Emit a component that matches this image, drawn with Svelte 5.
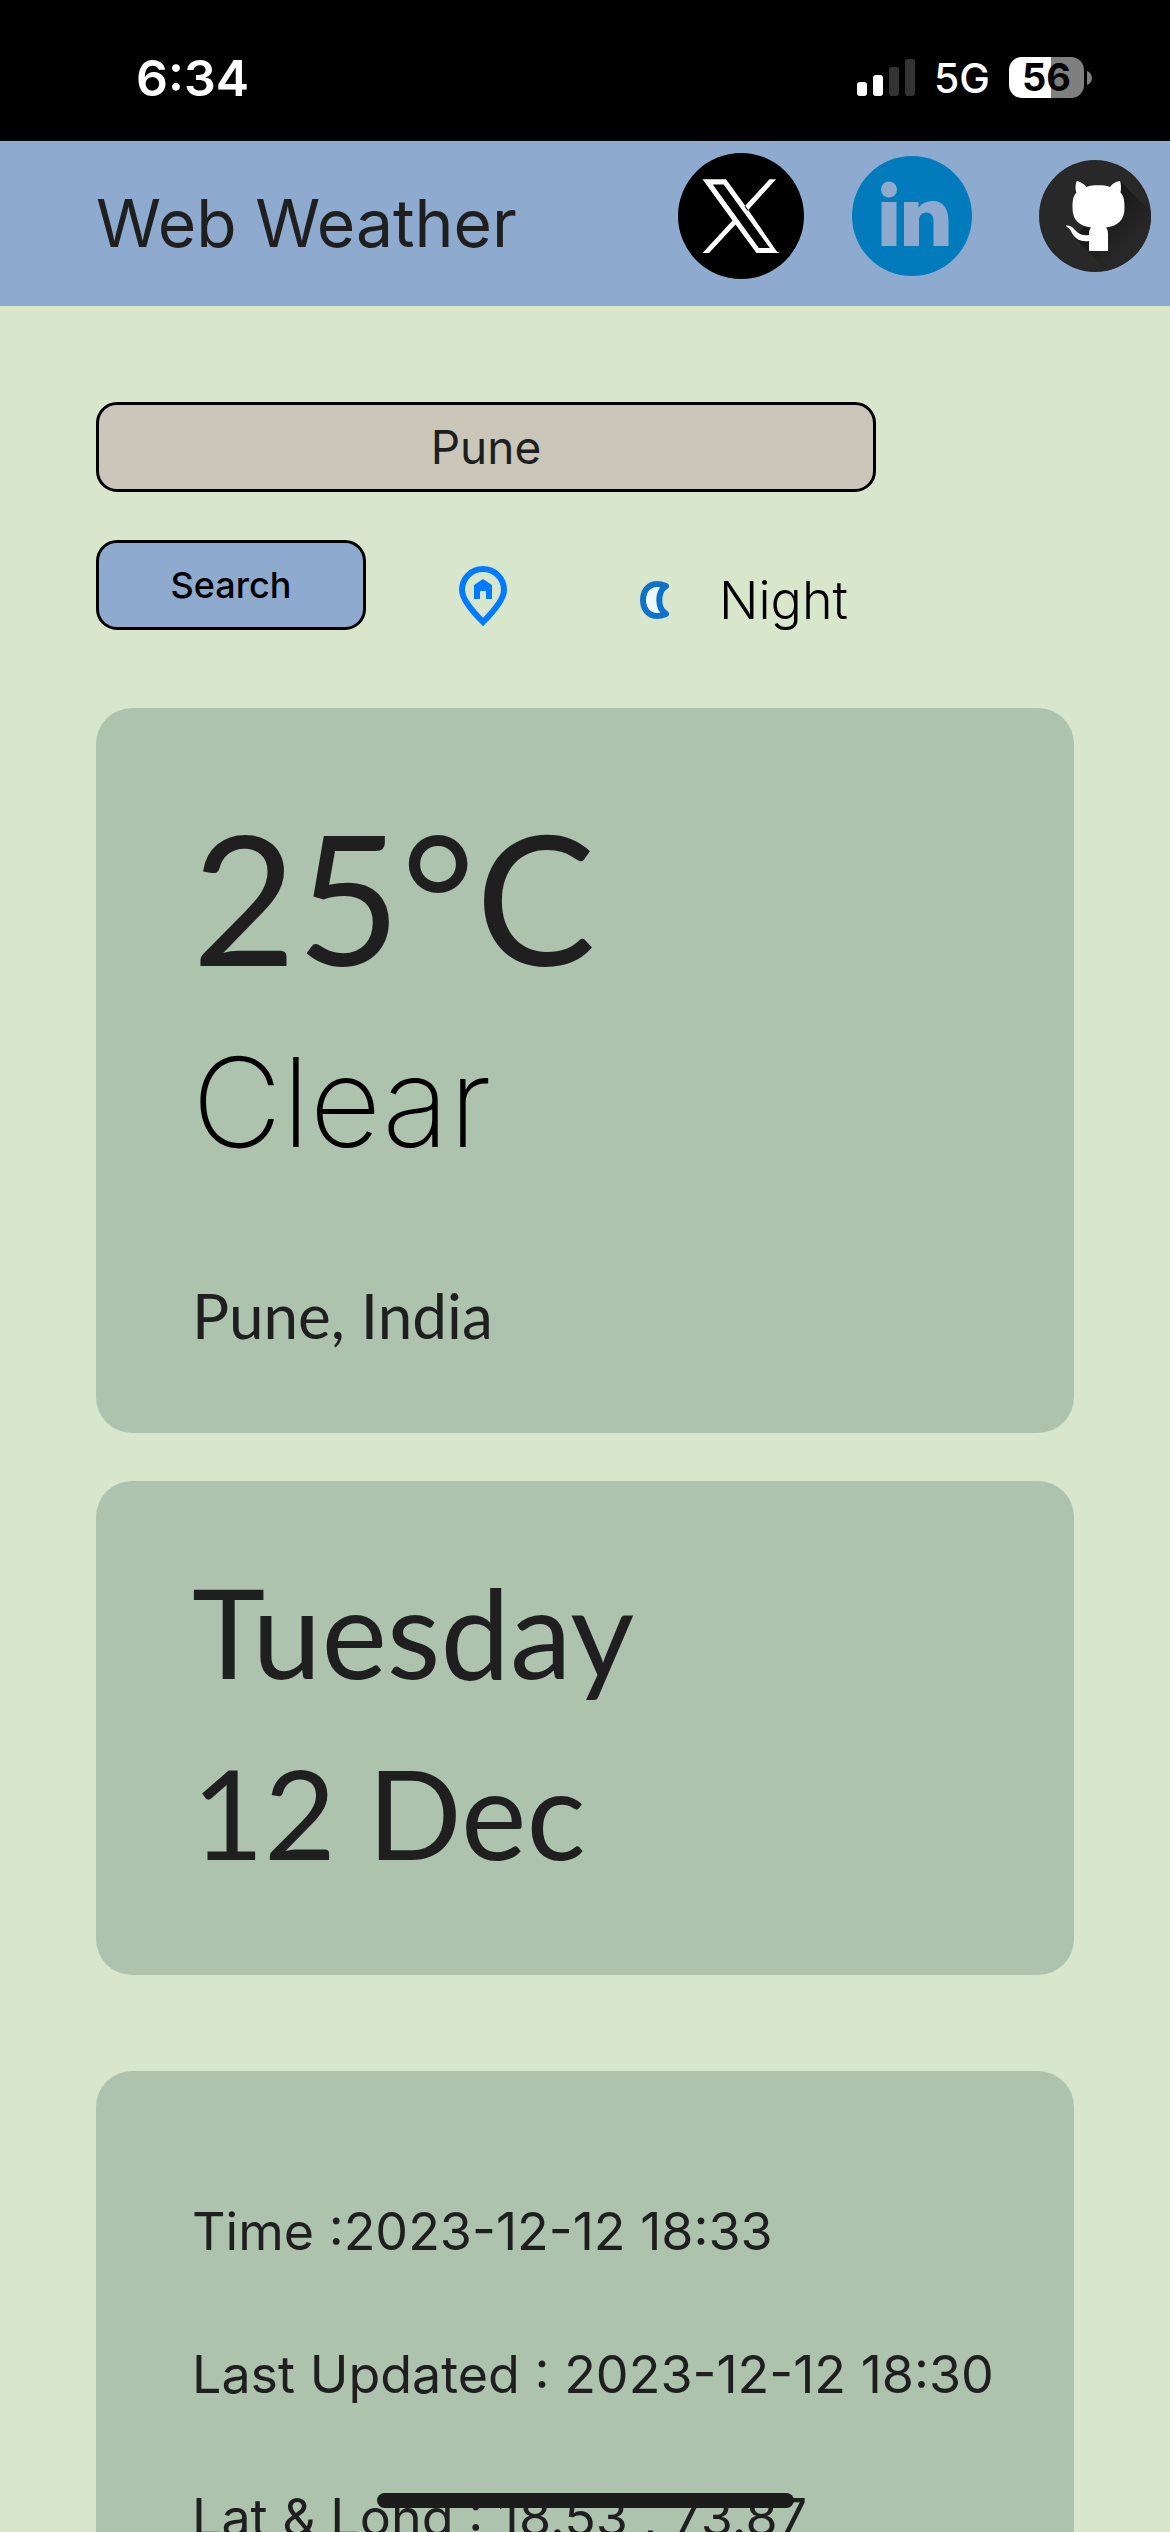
<script>
  let city = $state('Pune');

  const signal = [
    { height: 14, on: true },
    { height: 21, on: true },
    { height: 29, on: false },
    { height: 37, on: false }
  ];

  const details = [
    'Time :2023-12-12 18:33',
    'Last Updated : 2023-12-12 18:30',
    'Lat & Long : 18.53 , 73.87'
  ];
</script>

<div class="screen">
  <div class="status">
    <time class="clock">6:34</time>
    <div class="indicators">
      <div class="signal">
        {#each signal as bar}
          <span class="bar" class:on={bar.on} style="height: {bar.height}px"></span>
        {/each}
      </div>
      <span class="network">5G</span>
      <div class="battery">
        <span class="level">56</span>
        <svg class="cap" width="5" height="14" viewBox="0 0 5 14" aria-hidden="true">
          <path d="M0 0C3 1 5 4 5 7S3 13 0 14Z" fill="#7f7f7f" />
        </svg>
      </div>
    </div>
  </div>

  <header>
    <h1>Web Weather</h1>
    <nav>
      <a class="x" href="#x" aria-label="X">
        <svg viewBox="0 0 126 126">
          <circle cx="63" cy="63" r="63" fill="#000" />
          <path fill="#fff" fill-rule="evenodd" d="M24.5 26.3H48L71 58 99 98.800 102 100H78.500L57.500 71.500 31 100H24.500L54.500 67.500ZM34.800 31.500 80.800 95H91.800L45.600 31.500ZM66.500 53.500 91.500 26.300H98L69.500 57.800Z" />
        </svg>
      </a>
      <a class="linkedin" href="#linkedin" aria-label="LinkedIn">
        <svg viewBox="0 0 120 120">
          <circle cx="60" cy="60" r="60" fill="#027bbc" />
          <g fill="#8eabcf">
            <circle cx="37" cy="33.500" r="8" />
            <path d="M29.500 46H44.500V90H29.500ZM52 46H66.500V52C69 48 74 45 80.500 45 92 45 96.500 53 96.500 66V90H81.500V65C81.500 60 79 56.500 74 56.500 69.500 56.500 67 60 67 65V90H52Z" />
          </g>
        </svg>
      </a>
      <a class="github" href="#github" aria-label="GitHub">
        <svg viewBox="0 0 112 112">
          <defs>
            <linearGradient id="shade" x1="55" y1="50" x2="90" y2="85" gradientUnits="userSpaceOnUse">
              <stop offset="0" stop-color="#151515" />
              <stop offset="1" stop-color="#282828" />
            </linearGradient>
            <clipPath id="disc"><circle cx="56" cy="56" r="56" /></clipPath>
          </defs>
          <circle cx="56" cy="56" r="56" fill="#282828" />
          <path clip-path="url(#disc)" fill="url(#shade)" d="M81 21 116 56V112H68L36 78 50 60Z" />
          <path fill="#fff" d="M38 21C37 21 35.500 29 37.500 32.500 34 36 33.500 41 33.500 48 33.500 61 41 66 52 67.500 50 70 50 72 50 75 42 76 39 73 35.500 69.500 33 66 30 65 27 65.500 27 67 30 67.500 32 71 35 78 41 82.500 50 81V91H69V75C69 71 68.500 69 67 67.500 78 66 85.500 61 85.500 48 85.500 41 85 36 81.500 32.500 82.500 29 82 21 80.500 21 77 21.500 73 24 71 27 67 25.300 64 25.300 59.500 25.300 55 25.300 51 25.300 47.500 27 45 24 41 21.500 38 21Z" />
        </svg>
      </a>
    </nav>
  </header>

  <main>
    <form onsubmit={(e) => e.preventDefault()}>
      <input type="text" aria-label="City" bind:value={city} />
      <div class="actions">
        <button class="search" type="submit">Search</button>
        <button class="locate" type="button" aria-label="Use my location">
          <svg width="48" height="60" viewBox="0 0 48 60">
            <path fill="none" stroke="#007bff" stroke-width="6" d="M24 56C12 44 3 33 3 24A21 21 0 0 1 45 24C45 33 36 44 24 56Z" />
            <path fill="#007bff" d="M24 13 33 19V33H27V25H21V33H15V19Z" />
          </svg>
        </button>
        <div class="period">
          <svg width="32" height="40" viewBox="0 0 32 40" aria-hidden="true">
            <path fill="#eefaff" stroke="#0e72c6" stroke-width="6" stroke-linejoin="round" d="M27 6C12 0 4 9 4 20S12 40 27 34C18 28 18 12 27 6Z" />
          </svg>
          <span>Night</span>
        </div>
      </div>
    </form>

    <section class="card current">
      <p class="temperature">25°C</p>
      <p class="condition">Clear</p>
      <p class="place">Pune, India</p>
    </section>

    <section class="card date">
      <p>Tuesday</p>
      <p>12 Dec</p>
    </section>

    <section class="card details">
      {#each details as line}
        <p>{line}</p>
      {/each}
    </section>
  </main>

  <div class="home"></div>
</div>

<style>
  :global(body) {
    margin: 0;
    background: #d8e6cb;
  }

  .screen {
    box-sizing: border-box;
    height: 100vh;
    overflow: hidden;
    background: #d8e6cb;
    color: #1f1f1f;
    font-family: Inter, 'Liberation Sans', sans-serif;
  }

  .status {
    display: flex;
    justify-content: space-between;
    align-items: center;
    box-sizing: border-box;
    height: 141px;
    padding: 14px 78px 0 136px;
    background: #000;
    color: #fff;
  }

  .clock {
    font-size: 50px;
    font-weight: 600;
    line-height: 60px;
  }

  .indicators {
    display: flex;
    align-items: center;
    gap: 19px;
  }

  .signal {
    display: flex;
    align-items: flex-end;
    gap: 6px;
  }

  .bar {
    width: 10px;
    border-radius: 3px;
    background: #333;
  }

  .bar.on {
    background: #fff;
  }

  .network {
    font-size: 41px;
    font-weight: 500;
    line-height: 48px;
  }

  .battery {
    display: flex;
    align-items: center;
    gap: 3px;
  }

  .level {
    width: 75px;
    border-radius: 13px;
    background: linear-gradient(90deg, #fff 56%, #7f7f7f 56%);
    color: #000;
    font-size: 38px;
    font-weight: 700;
    line-height: 41px;
    text-align: center;
  }

  header {
    display: flex;
    justify-content: space-between;
    box-sizing: border-box;
    height: 165px;
    padding: 12px 19px 0 96px;
    background: #8eabcf;
  }

  h1 {
    margin: 0;
    font-size: 66px;
    font-weight: 400;
    line-height: 141px;
  }

  nav {
    display: flex;
    align-items: center;
    height: 126px;
  }

  nav a,
  nav svg {
    display: block;
  }

  .x {
    width: 126px;
    margin-right: 48px;
  }

  .linkedin {
    width: 120px;
    margin-right: 67px;
  }

  .github {
    width: 112px;
  }

  main {
    padding: 96px 96px 0;
  }

  form {
    display: flex;
    flex-direction: column;
    gap: 48px;
    margin-bottom: 78px;
  }

  input {
    box-sizing: border-box;
    width: 80%;
    max-width: 780px;
    height: 90px;
    padding: 0;
    border: 3px solid #000;
    border-radius: 21px;
    background: #cac7ba;
    color: #1f1f1f;
    font: 400 46px/56px Inter, 'Liberation Sans', sans-serif;
    text-align: center;
  }

  .actions {
    display: flex;
    height: 90px;
  }

  button {
    padding: 0;
    font-family: inherit;
  }

  .search {
    width: 270px;
    border: 3px solid #000;
    border-radius: 21px;
    background: #8eabcf;
    color: #000;
    font-size: 36px;
    font-weight: 500;
  }

  .locate {
    margin: 26px 0 0 93px;
    height: 60px;
    border: 0;
    background: none;
  }

  .period {
    display: flex;
    align-items: center;
    gap: 48px;
    height: 60px;
    margin: 30px 0 0 132px;
    color: #000;
    font-size: 52px;
    font-weight: 300;
  }

  .card {
    border-radius: 36px;
    background: #adc3ae;
  }

  .card p {
    margin: 0;
  }

  .current {
    padding: 72px 96px 73px;
    margin-bottom: 48px;
    font-family: Lato, 'Liberation Sans', sans-serif;
  }

  .temperature {
    font-size: 180px;
    line-height: 232px;
  }

  .condition {
    color: #000;
    font-family: Inter, 'Liberation Sans', sans-serif;
    font-size: 124px;
    font-weight: 200;
    line-height: 180px;
  }

  .place {
    padding-top: 78px;
    font-size: 62px;
    line-height: 90px;
  }

  .date {
    padding: 60px 96px 72px;
    margin-bottom: 96px;
    font-family: Lato, 'Liberation Sans', sans-serif;
    font-size: 124px;
    line-height: 181px;
  }

  .details {
    padding: 89px 72px 87px 96px;
    font-size: 52px;
    line-height: 143px;
    white-space: nowrap;
  }

  .home {
    position: fixed;
    bottom: 24px;
    left: 50%;
    width: 417px;
    height: 15px;
    margin-left: -208px;
    border-radius: 8px;
    background: #1c1c1c;
  }
</style>
